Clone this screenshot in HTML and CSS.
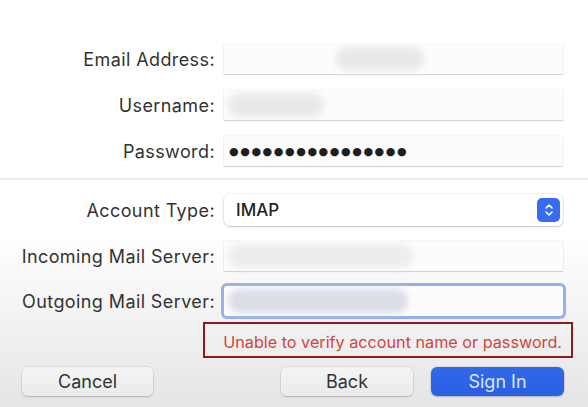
FILE: index.html
```html
<!DOCTYPE html>
<html lang="en">
<head>
  <meta charset="UTF-8">
  <title>Mail Account</title>
  <link rel="stylesheet" href="styles.css">
</head>
<body>

<div class="sheet">

  <!-- account -->
  <div class="form form-top">
    <label class="lbl">Email Address:</label>
    <div class="field"><span class="smudge smudge-email"></span></div>

    <label class="lbl">Username:</label>
    <div class="field"><span class="smudge smudge-user"></span></div>

    <label class="lbl">Password:</label>
    <div class="field"><span class="dots">●●●●●●●●●●●●●●●●</span></div>
  </div>

  <div class="sep"></div>

  <!-- servers -->
  <div class="form form-bottom">
    <label class="lbl">Account Type:</label>
    <div class="popup-btn">
      <span class="popup-val">IMAP</span>
      <span class="stepper">
        <svg width="10" height="16" viewBox="0 0 10 16">
          <path d="M2 6 L5 3 L8 6 M2 10 L5 13 L8 10" fill="none" stroke="#fff" stroke-width="1.6" stroke-linecap="round" stroke-linejoin="round"/>
        </svg>
      </span>
    </div>

    <label class="lbl">Incoming Mail Server:</label>
    <div class="field"><span class="smudge smudge-in"></span></div>

    <label class="lbl">Outgoing Mail Server:</label>
    <div class="field field-focus"><span class="smudge smudge-out"></span></div>
  </div>

  <div class="error-row">
    <div class="error">Unable to verify account name or password.</div>
  </div>

  <div class="buttons">
    <div class="btn">Cancel</div>
    <div class="btn btn-back">Back</div>
    <div class="btn btn-primary">Sign In</div>
  </div>

</div>

</body>
</html>
```

FILE: styles.css
```css
* {
  margin: 0;
  padding: 0;
  box-sizing: border-box;
}

body {
  width: 588px;
  height: 407px;
  overflow: hidden;
  font-family: Inter, "Liberation Sans", sans-serif;
  color: #363636;
  background: linear-gradient(to bottom, #ffffff 0, #ffffff 235px, #e5e5e5 407px);
}

.sheet {
  padding-top: 44px;
}

.form {
  display: grid;
  grid-template-columns: 215px 339px;
  column-gap: 9px;
}

.form-top {
  row-gap: 16px;
}

.form-bottom {
  row-gap: 15px;
}

.lbl {
  font-size: 18px;
  letter-spacing: 0.4px;
  text-align: right;
  align-self: center;
  white-space: nowrap;
  color: #333;
}

.field {
  height: 30px;
  background: #fcfcfc;
  box-shadow: 0 1px 1px rgba(0, 0, 0, 0.13), 0 0 0 1px rgba(0, 0, 0, 0.03);
  display: flex;
  align-items: center;
  padding-left: 4px;
}

.field-focus {
  border-radius: 3px;
  box-shadow: 0 0 0 3px #93b1f3;
}

.smudge {
  display: block;
  height: 24px;
  border-radius: 12px;
  background: #e9e9e9;
  filter: blur(3px);
}

.smudge-email {
  width: 88px;
  margin-left: 108px;
}

.smudge-user {
  width: 96px;
}

.smudge-in {
  width: 185px;
  background: #ededed;
}

.smudge-out {
  width: 180px;
  background: #dcdee6;
}

.dots {
  font-family: "DejaVu Sans", sans-serif;
  font-size: 11px;
  letter-spacing: 1.6px;
  color: #1e1e1e;
  padding-left: 1px;
}

.sep {
  height: 2px;
  background: #ececec;
  margin: 12px 0 14px;
}

.popup-btn {
  height: 32px;
  background: #fff;
  border-radius: 6px;
  box-shadow: 0 1px 2px rgba(0, 0, 0, 0.18), 0 0 0 1px rgba(0, 0, 0, 0.05);
  display: flex;
  align-items: center;
  justify-content: space-between;
  padding: 0 3px 0 12px;
}

.popup-val {
  font-size: 17px;
  font-weight: 500;
  color: #222;
}

.stepper {
  width: 23px;
  height: 24px;
  border-radius: 5px;
  background: #356cf0;
  display: flex;
  align-items: center;
  justify-content: center;
}

.error-row {
  display: flex;
  justify-content: flex-end;
  padding-right: 15px;
  margin-top: 6px;
}

.error {
  width: 370px;
  height: 36px;
  border: 2px solid #8e1b1b;
  color: #d5453d;
  font-size: 16.2px;
  text-align: right;
  padding: 8px 9px 0 0;
  white-space: nowrap;
}

.buttons {
  display: flex;
  gap: 18px;
  padding: 0 24px 0 22px;
  margin-top: 9px;
}

.btn {
  width: 131px;
  height: 29px;
  border-radius: 6px;
  background: linear-gradient(to bottom, #f4f4f4, #ebebeb);
  box-shadow: 0 1px 2px rgba(0, 0, 0, 0.18), 0 0 0 1px rgba(0, 0, 0, 0.05);
  font-size: 18px;
  color: #333;
  display: flex;
  align-items: center;
  justify-content: center;
}

.btn-back {
  margin-left: auto;
  width: 132px;
}

.btn-primary {
  width: 133px;
  background: linear-gradient(to bottom, #3169ec, #2a5fe2);
  color: #dbe5fb;
}
```
